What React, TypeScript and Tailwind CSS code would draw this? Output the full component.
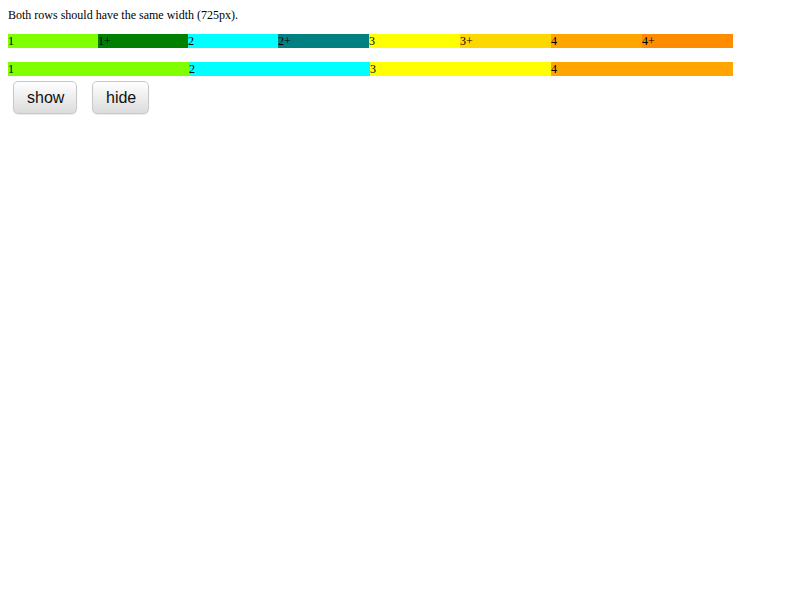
import { useState } from "react";

const wide = [
    { label: "1", color: "bg-[#7fff00]", w: "w-[90px]" },
    { label: "1+", color: "bg-[#008000]", w: "w-[90px]" },
    { label: "2", color: "bg-[#00ffff]", w: "w-[90px]" },
    { label: "2+", color: "bg-[#008080]", w: "w-[91px]" },
    { label: "3", color: "bg-[#ffff00]", w: "w-[91px]" },
    { label: "3+", color: "bg-[#ffd700]", w: "w-[91px]" },
    { label: "4", color: "bg-[#ffa500]", w: "w-[91px]" },
    { label: "4+", color: "bg-[#ff8c00]", w: "w-[91px]" },
];

const narrow = [
    { label: "1", color: "bg-[#7fff00]", w: "w-[181px]" },
    { label: "2", color: "bg-[#00ffff]", w: "w-[181px]" },
    { label: "3", color: "bg-[#ffff00]", w: "w-[181px]" },
    { label: "4", color: "bg-[#ffa500]", w: "w-[182px]" },
];

function Row({ cells }: { cells: { label: string; color: string; w: string }[] }) {
    return (
        <div className="flex h-[14px] w-[725px]">
            {cells.map((c) => (
                <div key={c.label} className={`${c.w} shrink-0 ${c.color} text-[12px] leading-[15px] text-black`}>
                    {c.label}
                </div>
            ))}
        </div>
    );
}

export default function App() {
    const [shown, setShown] = useState(true);
    const btn =
        "h-[33px] rounded-[5px] border border-[#c8c8c8] bg-gradient-to-b from-white to-[#dcdcdc] px-[13px] text-[16px] text-[#111] shadow-[0_1px_1px_rgba(0,0,0,0.08)]";

    return (
        <main className="min-h-screen bg-white p-2 font-['Liberation_Serif',serif] text-black">
            <p className="text-[12px] leading-[15px]">Both rows should have the same width (725px).</p>
            <div className="mt-[11px]">{shown ? <Row cells={wide} /> : <div className="h-[14px]" />}</div>
            <div className="mt-[14px]">
                <Row cells={narrow} />
            </div>
            <div className="mt-[5px] flex gap-[15px] pl-[5px] font-['Liberation_Sans',sans-serif]">
                <button className={`${btn} w-[64px]`} onClick={() => setShown(true)}>
                    show
                </button>
                <button className={`${btn} w-[57px]`} onClick={() => setShown(false)}>
                    hide
                </button>
            </div>
        </main>
    );
}
